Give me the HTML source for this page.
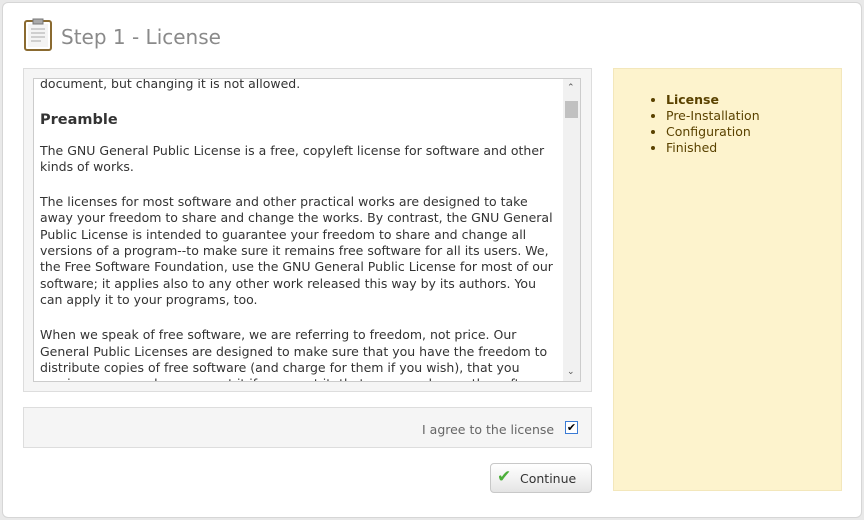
<!DOCTYPE html>
<html><head><style>
body{margin:0;width:864px;height:520px;background:#e9e9e9;font-family:"DejaVu Sans","Liberation Sans",sans-serif;position:relative;overflow:hidden}
.card{position:absolute;left:2px;top:2px;width:858px;height:514px;background:#fff;border:1px solid #d6d6d6;border-radius:6px}
.title{position:absolute;left:61px;top:25px;font-size:20px;color:#8a8a8a}
.panel{position:absolute;left:23px;top:68px;width:567px;height:322px;background:#f5f5f5;border:1px solid #ddd}
.ta{position:absolute;left:33px;top:78px;width:546px;height:302px;background:#fff;border:1px solid #ccc;overflow:hidden}
.txt{position:absolute;left:6px;top:-3px;font-size:12.5px;line-height:16.3px;color:#333;white-space:nowrap}
.txt p{margin:0 0 19px}
.txt h4{font-size:14.5px;margin:20px 0 14px}
.sb{position:absolute;right:0;top:0;width:17px;height:302px;background:#f1f1f1}
.side{position:absolute;left:613px;top:68px;width:227px;height:421px;background:#fdf3cd;border:1px solid #f3e7bb}
.side ul{margin:23px 0 0 52px;padding:0;font-size:12.5px;line-height:16px;color:#5a4200}
.agree{position:absolute;left:23px;top:407px;width:567px;height:39px;background:#f5f5f5;border:1px solid #ddd}
.btn{position:absolute;left:490px;top:463px;width:100px;height:28px;border:1px solid #c8c8c8;border-radius:4px;background:linear-gradient(#fff,#f0f0f0 60%,#e4e4e4)}
</style></head><body>
<div class="card"></div>
<svg style="position:absolute;left:24px;top:18px" width="29" height="33"><rect x="1" y="3" width="26" height="29" rx="2" fill="#fff" stroke="#8a6a30" stroke-width="2"/><rect x="4" y="6" width="20" height="23" fill="#f4f4f4"/><rect x="9" y="1" width="10" height="5" fill="#aaa" stroke="#777"/><g stroke="#aaa"><line x1="7" y1="11" x2="21" y2="11"/><line x1="7" y1="15" x2="21" y2="15"/><line x1="7" y1="19" x2="21" y2="19"/><line x1="7" y1="23" x2="17" y2="23"/></g></svg>
<div class="title">Step 1 - License</div>
<div class="panel"></div>
<div class="ta"><div class="txt">
<p>document, but changing it is not allowed.</p>
<h4>Preamble</h4>
<p>The GNU General Public License is a free, copyleft license for software and other<br>kinds of works.</p>
<p>The licenses for most software and other practical works are designed to take<br>away your freedom to share and change the works. By contrast, the GNU General<br>Public License is intended to guarantee your freedom to share and change all<br>versions of a program--to make sure it remains free software for all its users. We,<br>the Free Software Foundation, use the GNU General Public License for most of our<br>software; it applies also to any other work released this way by its authors. You<br>can apply it to your programs, too.</p>
<p>When we speak of free software, we are referring to freedom, not price. Our<br>General Public Licenses are designed to make sure that you have the freedom to<br>distribute copies of free software (and charge for them if you wish), that you<br>receive source code or can get it if you want it, that you can change the software</p>
</div><div class="sb"><div style="position:absolute;left:2px;top:22px;width:13px;height:17px;background:#c1c1c1"></div><div style="position:absolute;left:4px;top:4px;font-size:9px;color:#555">&#8963;</div><div style="position:absolute;left:4px;bottom:4px;font-size:9px;color:#555">&#8964;</div></div></div>
<div class="side"><ul><li><b>License</b></li><li>Pre-Installation</li><li>Configuration</li><li>Finished</li></ul></div>
<div class="agree"><span style="position:absolute;left:398px;top:14px;font-size:12.5px;color:#666">I agree to the license</span><div style="position:absolute;left:541px;top:13px;width:11px;height:11px;border:1px solid #3a7bd5;background:#fff;font-size:11px;line-height:11px;text-align:center">&#10004;</div></div>
<div class="btn"><span style="position:absolute;left:6px;top:3px;color:#4caf3a;font-size:17px">&#10004;</span><span style="position:absolute;left:29px;top:7px;font-size:12.5px;color:#333">Continue</span></div>
</body></html>
